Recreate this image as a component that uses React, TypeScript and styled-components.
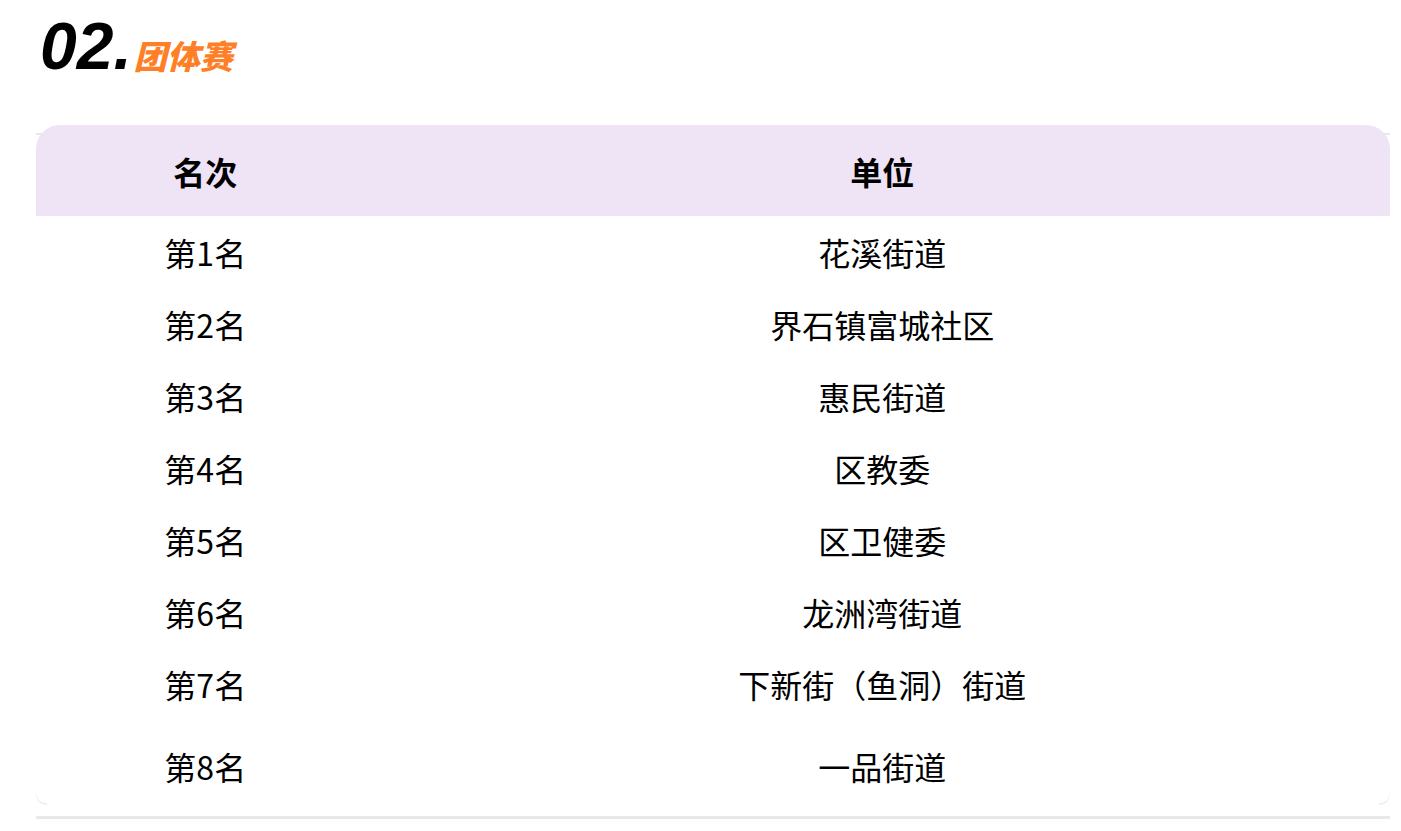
import React from "react";
import styled, { createGlobalStyle } from "styled-components";

const GlobalStyle = createGlobalStyle`
  html, body {
    margin: 0;
    padding: 0;
    background: #fff;
  }
  body {
    font-family: "Noto Sans CJK SC", "Noto Sans", sans-serif;
    color: #000;
  }
`;

const Page = styled.div`
  padding: 14px 11px 0 36px;
  width: 1354px;
`;

const Title = styled.h2`
  margin: 0 0 0 4px;
  height: 111px;
  display: flex;
  align-items: flex-start;
  font-style: italic;
  font-weight: 900;
`;

const Num = styled.span`
  font-family: "Liberation Sans", Arial, sans-serif;
  font-size: 66px;
  line-height: 64px;
`;

const Label = styled.span`
  font-family: "Noto Sans CJK SC", sans-serif;
  font-size: 33px;
  line-height: 33px;
  color: #ff7f27;
  margin-top: 25px;
  margin-left: 2px;
`;

const Frame = styled.div`
  position: relative;
  border-bottom: 3px solid #e6e8ea;

  &::before {
    content: "";
    position: absolute;
    left: 0;
    right: 0;
    top: 8px;
    height: 2px;
    background: #e8e8e8;
  }
`;

// faint rounded corner marks of the frame near the bottom
const Corner = styled.span<{ $side: "left" | "right" }>`
  position: absolute;
  z-index: 1;
  bottom: 11px;
  ${(p) => p.$side}: 0;
  width: 10px;
  height: 10px;
  border-bottom: 2px solid #eceef0;
  ${(p) => (p.$side === "left" ? "border-left" : "border-right")}: 1px solid #f2f3f4;
  ${(p) =>
    p.$side === "left"
      ? "border-bottom-left-radius: 10px;"
      : "border-bottom-right-radius: 10px;"}
`;

const Table = styled.table`
  position: relative;
  width: 100%;
  border-collapse: collapse;
  table-layout: fixed;
`;

const HeadRow = styled.tr`
  background: #efe3f6;
`;

const HeadCell = styled.th<{ $first?: boolean; $last?: boolean }>`
  height: 91px;
  padding: 0;
  font-size: 32px;
  font-weight: 700;
  text-align: center;
  ${(p) => (p.$first ? "border-top-left-radius: 24px;" : "")}
  ${(p) => (p.$last ? "border-top-right-radius: 24px;" : "")}
`;

const Cell = styled.td<{ $tall?: boolean }>`
  box-sizing: border-box;
  height: ${(p) => (p.$tall ? "96px" : "72px")};
  padding: ${(p) => (p.$tall ? "0 0 4px" : "0")};
  font-size: 32px;
  text-align: center;
  vertical-align: middle;
  background: #fff;
`;

const rows = [
  "花溪街道",
  "界石镇富城社区",
  "惠民街道",
  "区教委",
  "区卫健委",
  "龙洲湾街道",
  "下新街（鱼洞）街道",
  "一品街道",
];

export default function App() {
  return (
    <>
      <GlobalStyle />
      <Page>
        <Title>
          <Num>02.</Num>
          <Label>团体赛</Label>
        </Title>
        <Frame>
          <Table>
            <colgroup>
              <col style={{ width: "25%" }} />
              <col style={{ width: "75%" }} />
            </colgroup>
            <thead>
              <HeadRow>
                <HeadCell $first>名次</HeadCell>
                <HeadCell $last>单位</HeadCell>
              </HeadRow>
            </thead>
            <tbody>
              {rows.map((name, i) => (
                <tr key={name}>
                  <Cell $tall={i === rows.length - 1}>第{i + 1}名</Cell>
                  <Cell $tall={i === rows.length - 1}>{name}</Cell>
                </tr>
              ))}
            </tbody>
          </Table>
          <Corner $side="left" />
          <Corner $side="right" />
        </Frame>
      </Page>
    </>
  );
}
